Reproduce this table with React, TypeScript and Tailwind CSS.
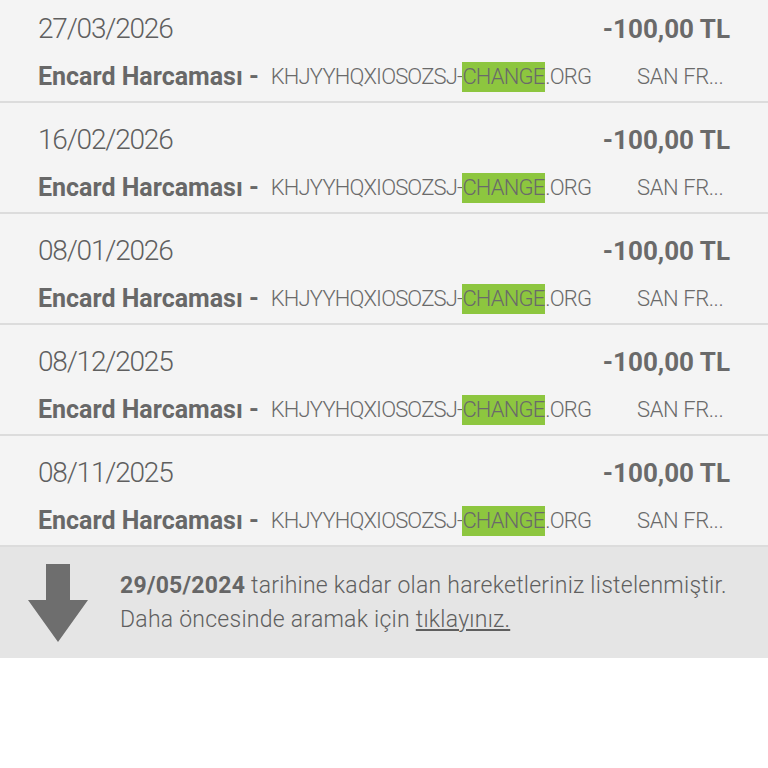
import React from "react";

const rows = [
  { date: "27/03/2026" },
  { date: "16/02/2026" },
  { date: "08/01/2026" },
  { date: "08/12/2025" },
  { date: "08/11/2025" },
];

function Row({ date }: { date: string }) {
  return (
    <div className="h-[111px] border-b-2 border-[#dcdcdc] bg-[#f4f4f4] pl-[38px] pr-[38px] flex flex-col">
      <div className="flex justify-between items-center h-[34px] mt-[20px]">
        <span className="text-[28px] leading-[34px] font-light text-[#5f5f5f] tracking-[-1.2px]">{date}</span>
        <span className="text-[26px] leading-[34px] font-bold text-[#6a6a6a] tracking-[0px]">-100,00 TL</span>
      </div>
      <div className="flex items-center h-[30px] mt-[16px]">
        <span className="text-[25px] leading-[30px] font-bold text-[#686868] tracking-[0px] whitespace-nowrap">
          Encard Harcaması -
        </span>
        <span className="ml-[12px] text-[22px] leading-[30px] font-light text-[#6a6a6a] tracking-[-0.85px] whitespace-nowrap">
          KHJYYHQXIOSOZSJ-<span className="inline-block bg-[#8dc63f] pr-[1px]">CHANGE</span>.ORG
        </span>
        <span className="ml-auto w-[93px] text-[22px] leading-[30px] font-light text-[#6a6a6a] tracking-[-0.4px] whitespace-nowrap">
          SAN FR...
        </span>
      </div>
    </div>
  );
}

export default function App() {
  return (
    <div
      className="w-[768px] h-[768px] bg-white overflow-hidden"
      style={{ fontFamily: "Roboto, 'Liberation Sans', sans-serif" }}
    >
      <div className="-mt-[8px]">
        {rows.map((r) => (
          <Row key={r.date} date={r.date} />
        ))}
        <div className="h-[111px] bg-[#e5e5e5] flex items-center">
          <div className="w-[114px] flex justify-center pl-[1px]">
            <svg width="60" height="78" viewBox="0 0 60 78">
              <path d="M18 0 H42 V36 H60 L30 78 L0 36 H18 Z" fill="#6e6e6e" />
            </svg>
          </div>
          <div className="pl-[6px] text-[23px] leading-[34px] font-light text-[#5f5f5f] tracking-[0.25px]">
            <div className="whitespace-nowrap">
              <span className="font-bold text-[#666]">29/05/2024</span> tarihine kadar olan hareketleriniz listelenmiştir.
            </div>
            <div className="whitespace-nowrap">
              Daha öncesinde aramak için <span className="underline underline-offset-2">tıklayınız.</span>
            </div>
          </div>
        </div>
      </div>
    </div>
  );
}
